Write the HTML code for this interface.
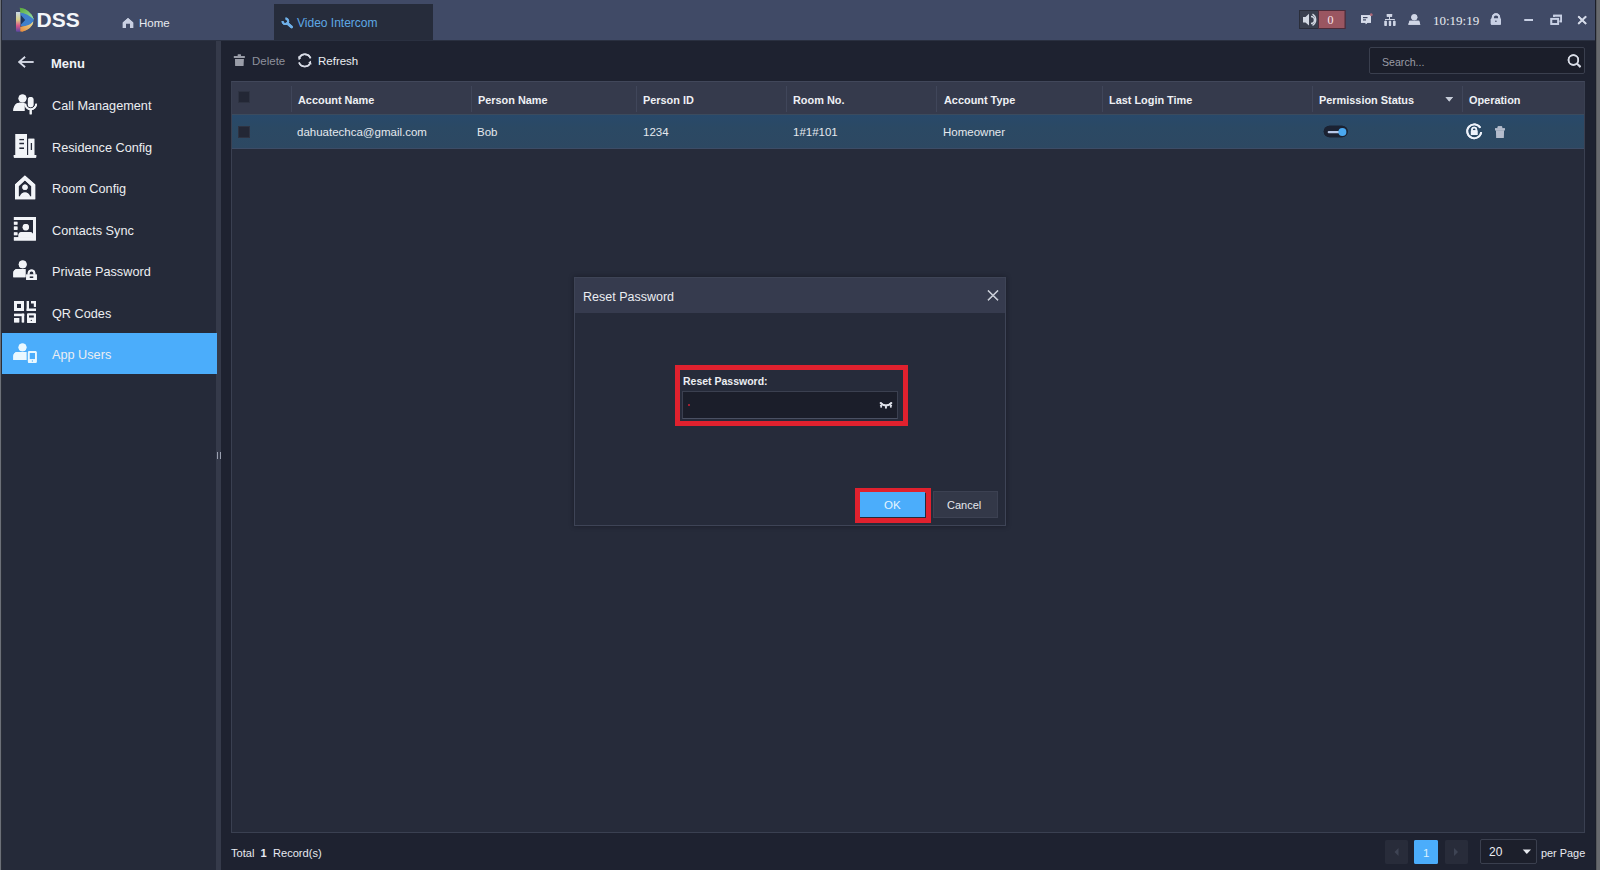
<!DOCTYPE html>
<html><head><meta charset="utf-8">
<style>
*{margin:0;padding:0;box-sizing:border-box}
html,body{width:1600px;height:870px;overflow:hidden;background:#1e2230;font-family:"Liberation Sans",sans-serif;color:#e6e8ee}
.a{position:absolute}
.t{position:absolute;white-space:nowrap;line-height:1}
#hdr{left:0;top:0;width:1600px;height:41px;background:#404a66;border-bottom:1px solid #2a3040}
#frameL{left:0;top:0;width:1px;height:870px;background:#6c7078}
#frameL2{left:1px;top:0;width:1px;height:870px;background:#2a2e38}
#frameR{left:1596px;top:0;width:4px;height:870px;background:#67696d;border-left:1px solid #56585c}
#frameR2{left:1595px;top:0;width:1px;height:870px;background:#1c1f2a}
#side{left:2px;top:41px;width:214px;height:829px;background:#252a39}
#split{left:216px;top:41px;width:5px;height:829px;background:#353a4a}
#main{left:221px;top:41px;width:1375px;height:829px;background:#1e2230}
#tbl{left:231px;top:81px;width:1354px;height:752px;background:#262b3a;border:1px solid #3a4051;border-top-color:#41475a}
#thead{left:232px;top:82px;width:1352px;height:32px;background:#353a4c}
#row{left:232px;top:114px;width:1352px;height:35px;background:linear-gradient(#28496a,#2b4964 40%,#2d4862);border-top:1px solid #3b4b5e;border-bottom:1px solid #3d4c66}
.sep{position:absolute;top:86px;width:1px;height:26px;background:#40465a}
.th{font-weight:bold;font-size:10.9px;color:#eef0f4;top:95px}
.td{font-size:11.5px;color:#e4e8ee;top:127px}
.cb{position:absolute;width:12px;height:12px;background:#232735;border:1px solid #2e3342}
.nav{font-size:12.7px;color:#eceef2;left:52px}
</style></head><body>
<div id="hdr" class="a"></div>
<div id="side" class="a"></div>
<div id="split" class="a"></div>
<div id="main" class="a"></div>
<div id="frameL" class="a"></div>
<div id="frameL2" class="a"></div>
<div id="frameR2" class="a"></div>
<div id="frameR" class="a"></div>

<!-- header -->
<div class="t" style="left:36.5px;top:8.5px;font-size:21px;font-weight:bold;color:#f4f6fa">DSS</div>
<div class="a" style="left:274px;top:4px;width:159px;height:36px;background:#262c3b"></div>
<div class="t" style="left:139px;top:18px;font-size:11.5px;color:#e8eaf0">Home</div>
<div class="t" style="left:297px;top:17px;font-size:12px;color:#5ea8e4">Video Intercom</div>
<div class="t" style="left:1433px;top:14px;font-size:13px;font-family:'Liberation Serif',serif;color:#e8eaf0">10:19:19</div>

<!-- sidebar -->
<div class="t" style="left:51px;top:57px;font-size:13px;font-weight:bold;color:#f0f2f6">Menu</div>
<div class="t nav" style="top:100px">Call Management</div>
<div class="t nav" style="top:142px">Residence Config</div>
<div class="t nav" style="top:183px">Room Config</div>
<div class="t nav" style="top:225px">Contacts Sync</div>
<div class="t nav" style="top:266px">Private Password</div>
<div class="t nav" style="top:308px">QR Codes</div>
<div class="a" style="left:2px;top:333px;width:215px;height:41px;background:#4badfb"></div>
<div class="t nav" style="top:349px">App Users</div>

<!-- toolbar -->
<div class="t" style="left:252px;top:56px;font-size:11.5px;color:#8e919c">Delete</div>
<div class="t" style="left:318px;top:56px;font-size:11.5px;color:#eceef2">Refresh</div>
<div class="a" style="left:1369px;top:47px;width:216px;height:27px;background:#1b1e2a;border:1px solid #3a3f4e;border-radius:2px"></div>
<div class="t" style="left:1382px;top:57px;font-size:10.6px;color:#9a9ca6">Search...</div>

<!-- table -->
<div id="tbl" class="a"></div>
<div id="thead" class="a"></div>
<div id="row" class="a"></div>
<div class="sep" style="left:291px"></div>
<div class="sep" style="left:471px"></div>
<div class="sep" style="left:636px"></div>
<div class="sep" style="left:786px"></div>
<div class="sep" style="left:936px"></div>
<div class="sep" style="left:1102px"></div>
<div class="sep" style="left:1312px"></div>
<div class="sep" style="left:1462px"></div>
<div class="cb" style="left:238px;top:91px"></div>
<div class="cb" style="left:238px;top:126px"></div>
<div class="t th" style="left:298px">Account Name</div>
<div class="t th" style="left:478px">Person Name</div>
<div class="t th" style="left:643px">Person ID</div>
<div class="t th" style="left:793px">Room No.</div>
<div class="t th" style="left:944px">Account Type</div>
<div class="t th" style="left:1109px">Last Login Time</div>
<div class="t th" style="left:1319px">Permission Status</div>
<div class="t th" style="left:1469px">Operation</div>
<div class="t td" style="left:297px">dahuatechca@gmail.com</div>
<div class="t td" style="left:477px">Bob</div>
<div class="t td" style="left:643px">1234</div>
<div class="t td" style="left:793px">1#1#101</div>
<div class="t td" style="left:943px">Homeowner</div>

<!-- footer -->
<div class="t" style="left:231px;top:848px;font-size:11.1px;color:#e8eaf0">Total&nbsp; <b>1</b>&nbsp; Record(s)</div>
<div class="t" style="left:1541px;top:848px;font-size:10.9px;color:#e8eaf0">per Page</div>




<!-- dialog -->
<div class="a" style="left:574px;top:277px;width:432px;height:249px;background:#262b3a;border:1px solid #3e4456;box-shadow:0 0 5px rgba(10,12,20,0.45)"></div>
<div class="a" style="left:575px;top:278px;width:430px;height:35px;background:#363b4e"></div>
<div class="t" style="left:583px;top:291px;font-size:12.5px;color:#eceef2">Reset Password</div>

<!-- dialog content -->
<div class="a" style="left:575px;top:313px;width:430px;height:212px;background:#262b3a"></div>
<div class="a" style="left:675px;top:365px;width:233px;height:61px;border:5px solid #e0212e"></div>
<div class="t" style="left:683px;top:376px;font-size:10.5px;font-weight:bold;color:#eceef2">Reset Password:</div>
<div class="a" style="left:682px;top:391px;width:216px;height:28px;background:#1b1e2a;border:1px solid #3b4050;border-bottom-color:#4a5062"></div>
<div class="a" style="left:688px;top:404px;width:2px;height:2px;background:#a02030"></div>
<div class="a" style="left:855px;top:488px;width:76px;height:35px;border:5px solid #e0212e"></div>
<div class="a" style="left:860px;top:492px;width:65px;height:25px;background:#4badfb"></div>
<div class="t" style="left:884px;top:500px;font-size:11.5px;color:#e6f4ff">OK</div>
<div class="a" style="left:933px;top:491px;width:65px;height:27px;background:#333848;border:1px solid #3c4152"></div>
<div class="t" style="left:947px;top:500px;font-size:11px;color:#e6e8ee">Cancel</div>

<!-- pagination -->
<div class="a" style="left:1385px;top:840px;width:23px;height:24px;background:#282c3a;border-radius:2px"></div>
<div class="a" style="left:1414px;top:840px;width:24px;height:24px;background:#4badfb;border-radius:2px"></div>
<div class="t" style="left:1423px;top:848px;font-size:11.5px;color:#d8f0ff">1</div>
<div class="a" style="left:1445px;top:840px;width:23px;height:24px;background:#282c3a;border-radius:2px"></div>
<div class="a" style="left:1480px;top:839px;width:57px;height:25px;background:#1c1f2b;border:1px solid #3a3f4e;border-radius:2px"></div>
<div class="t" style="left:1489px;top:846px;font-size:12px;color:#eceef2">20</div>
<!-- splitter handle -->
<div class="a" style="left:217px;top:452px;width:1px;height:7px;background:#9aa0b0"></div>
<div class="a" style="left:220px;top:452px;width:1px;height:7px;background:#9aa0b0"></div>
<svg class="a" style="left:0;top:0" width="1600" height="870" viewBox="0 0 1600 870">
<defs>
<linearGradient id="lgL" x1="0" y1="0" x2="0" y2="1"><stop offset="0" stop-color="#c8d8e8"/><stop offset="0.4" stop-color="#d8d088"/><stop offset="0.7" stop-color="#d85888"/><stop offset="1" stop-color="#6048a0"/></linearGradient>
<linearGradient id="lgG" x1="0" y1="0" x2="1" y2="1"><stop offset="0" stop-color="#58a838"/><stop offset="1" stop-color="#98e0a8"/></linearGradient>
<linearGradient id="lgO" x1="0" y1="1" x2="1" y2="0"><stop offset="0" stop-color="#e88838"/><stop offset="1" stop-color="#e0e0a0"/></linearGradient>
</defs>
<!-- DSS logo -->
<g>
<path d="M19.8 7.8 Q30.5 9.5 33.7 19.2 L30.2 18.6 Q27 13.6 20.6 12.8 Z" fill="url(#lgG)"/>
<path d="M20.6 12.8 Q27.5 13.8 33.7 19.2 Q33 23.6 29 25 Q25 26.2 21 25.8 Z" fill="#3f80cc"/>
<path d="M21 15.2 L25.2 20 L21 24.6 Z" fill="#20365e"/>
<path d="M20.4 27 Q29 26.4 33.4 21.6 Q32.2 28.6 22.6 31.6 L20.2 31.2 Z" fill="url(#lgO)"/>
<path d="M16 12 H20.2 V31.4 H17 Q16 31.4 16 30.4 Z" fill="url(#lgL)"/>
</g>
<!-- home -->
<path d="M122.8 22.5 L128 18 L133.2 22.5 V28 H130 V23.5 H126 V28 H122.8 Z" fill="#c9d0e2"/>
<!-- wrench -->
<path d="M285.5 18.55 A2.75 2.75 0 1 1 282.66 21.06" fill="none" stroke="#6fb0e8" stroke-width="2.1"/>
<path d="M287.6 23.5 L291.6 26.9" stroke="#6fb0e8" stroke-width="2.6" stroke-linecap="round"/>
<!-- speaker/alarm box -->
<rect x="1299.5" y="10.5" width="19" height="18" fill="#3a404f" stroke="#2a2e3b" stroke-width="1"/>
<rect x="1318.5" y="10.5" width="26.5" height="18" fill="#9a5661" stroke="#4c2c3a" stroke-width="1"/>
<path d="M1303 17 h2.5 l3.5 -3.2 v11.8 l-3.5 -3.2 h-2.5 z" fill="#d2d8e2"/>
<path d="M1311 16.5 a3.5 3.5 0 0 1 0 7" fill="none" stroke="#d2d8e2" stroke-width="1.6"/>
<path d="M1312.5 14.2 a6.5 6.5 0 0 1 0 11.2" fill="none" stroke="#d2d8e2" stroke-width="1.4"/>
<!-- message -->
<path d="M1361 15.2 h10 v7.5 h-3.5 l-1.8 1.6 v-1.6 h-4.7 z" fill="#d6dcea"/>
<rect x="1363" y="17" width="4.5" height="1.2" fill="#3e4762"/>
<rect x="1363" y="19.3" width="3" height="1.2" fill="#3e4762"/>
<circle cx="1371.2" cy="14.8" r="1.3" fill="#a86878"/>
<!-- network -->
<g fill="#d0d6e6">
<rect x="1386.8" y="13.9" width="5.3" height="2.8" rx="0.5"/>
<rect x="1389" y="16.5" width="1" height="3"/>
<rect x="1385" y="19" width="9.6" height="1"/>
<rect x="1384.5" y="20.7" width="2.2" height="5.3" rx="0.8"/>
<rect x="1388.9" y="20.7" width="2.2" height="5.3" rx="0.8"/>
<rect x="1393.2" y="20.7" width="2.2" height="5.3" rx="0.8"/>
</g>
<!-- person -->
<circle cx="1414.3" cy="17.2" r="3" fill="#d0d6e6"/>
<path d="M1409.5 20.8 h9.6 l1.2 4 h-12 z" fill="#d0d6e6"/>
<!-- lock -->
<path d="M1492.8 19 v-1.6 a3.2 3.2 0 0 1 6.4 0 v1.6" fill="none" stroke="#c8d0e4" stroke-width="2"/>
<rect x="1490.8" y="18.4" width="10.2" height="6.4" rx="1" fill="#c8d0e4"/>
<circle cx="1495.9" cy="21.3" r="0.8" fill="#3e4762"/>
<!-- minimize restore close -->
<rect x="1524.5" y="19" width="8.5" height="2" fill="#c8d0e4"/>
<path d="M1554 17 v-1.4 h7.2 v5.8 h-1.6" fill="none" stroke="#c8d0e4" stroke-width="1.6"/>
<rect x="1551.3" y="18.8" width="6.9" height="5.2" fill="none" stroke="#c8d0e4" stroke-width="1.7"/>
<path d="M1578.3 16.3 l7.8 7.6 M1586.1 16.3 l-7.8 7.6" stroke="#d4dae8" stroke-width="1.7"/>

<!-- sidebar -->
<path d="M33.5 62 H19.5 M25 56.8 L19.2 62 L25 67.2" fill="none" stroke="#d6dae6" stroke-width="1.6"/>
<g fill="#f2f4f8">
<!-- call mgmt -->
<circle cx="22.5" cy="98.3" r="3.9"/>
<path d="M13.3 111 C13.3 106 16 102.7 19.5 102.7 H24.5 V111 Z"/>
<rect x="27.9" y="97" width="5.5" height="10.2" rx="2.75"/>
<path d="M25.2 103.8 a5.5 5.5 0 0 0 11 0" fill="none" stroke="#f2f4f8" stroke-width="1.8"/>
<rect x="29.7" y="109" width="2" height="5.3"/>
<!-- building -->
<path fill-rule="evenodd" d="M15.5 134 H27 V155 H15.5 Z M19.2 138.8 V140.6 H24 V138.8 Z M19.2 142.6 V144.4 H24 V142.6 Z M19.2 147.2 V149 H24 V147.2 Z"/>
<path fill-rule="evenodd" d="M28.4 138.7 H34.3 V155 H28.4 Z M30.5 143 V150 H32.2 V143 Z"/>
<rect x="13.8" y="155" width="22.4" height="2.7" rx="0.6"/>
<!-- room config -->
<path fill-rule="evenodd" d="M24.9 175.5 L35.2 184.5 V199.2 H15 V184.5 Z M24.9 180.2 L18.6 186.2 V196.6 H31.4 V186.2 Z"/>
<circle cx="25" cy="187.2" r="2.6"/>
<path d="M20 196.8 C20.4 194 22.2 192.4 25 192.4 C27.8 192.4 29.6 194 30 196.8 Z"/>
<!-- contacts -->
<path fill-rule="evenodd" d="M13.9 216.9 H35.9 V240.5 H13.9 V237.3 H17.4 V220.1 H13.9 Z M17.4 220.1 V237.3 H33 V220.1 Z"/>
<rect x="13.9" y="221.8" width="3.5" height="2.8"/>
<rect x="13.9" y="226.6" width="3.5" height="3.2"/>
<rect x="13.9" y="232.4" width="3.5" height="2.8"/>
<circle cx="25.8" cy="227.2" r="3.1"/>
<path d="M18.5 237.4 V235 C18.5 233 20 231.9 22 231.9 H29.5 C31.5 231.9 33 233 33 235 V237.4 Z"/>
<!-- private password -->
<circle cx="22.7" cy="264.3" r="3.9"/>
<path d="M13.3 277.2 V273 C13.3 270.8 15 269.1 17.3 269.1 H25.5 V277.2 Z"/>
<path fill-rule="evenodd" d="M26.2 274.4 H36.8 V280.1 H26.2 Z M29.5 276.3 V277.9 H33.5 V276.3 Z"/>
<path d="M28.6 274.6 V273.2 a2.9 2.9 0 0 1 5.8 0 V274.6" fill="none" stroke="#f2f4f8" stroke-width="1.8"/>
<!-- QR -->
<path fill-rule="evenodd" d="M14.1 301 H24 V311.1 H14.1 Z M17 303.7 V308.1 H21 V303.7 Z"/>
<rect x="26.8" y="301" width="2.2" height="9.9"/>
<rect x="26.8" y="308.7" width="9.2" height="2.2"/>
<rect x="31" y="301" width="5" height="2.3"/>
<rect x="33.9" y="301" width="2.1" height="5.8"/>
<rect x="14.1" y="313.8" width="10" height="2.3"/>
<rect x="21.8" y="313.8" width="2.3" height="8.6"/>
<rect x="14.1" y="318" width="5.1" height="4.4"/>
<path fill-rule="evenodd" d="M28 313.6 H35 a1 1 0 0 1 1 1 V321.9 a1 1 0 0 1 -1 1 H28 a1 1 0 0 1 -1 -1 V314.6 a1 1 0 0 1 1 -1 Z M29 315.2 V317.7 H33.9 V315.2 Z M30.2 321 L31.25 319.2 L32.3 321 Z"/>
</g>
<!-- app users (on blue) -->
<g fill="#eaf8ff">
<circle cx="22.5" cy="347.3" r="3.9"/>
<path d="M13.3 360 V356 C13.3 353.8 15 352 17.3 352 H26.4 V360 Z"/>
<path fill-rule="evenodd" d="M29.4 351 H35.2 a1.5 1.5 0 0 1 1.5 1.5 V361.4 a1.5 1.5 0 0 1 -1.5 1.5 H29.4 a1.5 1.5 0 0 1 -1.5 -1.5 V352.5 a1.5 1.5 0 0 1 1.5 -1.5 Z M29.5 353 V359.2 H35.1 V353 Z M31.6 360.3 V361.8 H33 V360.3 Z"/>
</g>
<!-- toolbar trash -->
<g fill="#9a9da8">
<rect x="233.9" y="56" width="10.7" height="2"/>
<rect x="237.8" y="54.5" width="3" height="2"/>
<path d="M235 59 H243.7 L243.3 66 H235.4 Z"/>
</g>
<!-- refresh -->
<g fill="none" stroke="#d8dce6" stroke-width="1.6">
<path d="M299.63 57.17 A6.1 6.1 0 0 1 310.53 58.31"/>
<path d="M309.97 63.63 A6.1 6.1 0 0 1 299.07 62.49"/>
</g>
<path d="M298.27 56.32 L301.07 58.07 L298.81 59.98 Z" fill="#d8dce6"/>
<path d="M311.33 64.48 L308.53 62.73 L310.79 60.82 Z" fill="#d8dce6"/>
<!-- search -->
<circle cx="1573.4" cy="60" r="4.9" fill="none" stroke="#d8dce6" stroke-width="1.6"/>
<path d="M1577 63.6 L1580.5 67" stroke="#d8dce6" stroke-width="1.8"/>
<!-- sort -->
<path d="M1445.5 97 H1453 L1449.25 101.5 Z" fill="#c6ccd8"/>
<!-- toggle -->
<rect x="1323.7" y="125.8" width="24" height="11.4" rx="5.7" fill="#1b2232"/>
<rect x="1327.7" y="131" width="12" height="2.2" rx="1" fill="#b8c8e8"/>
<circle cx="1342.4" cy="132" r="4" fill="#4aa8f0"/>
<!-- reset op -->
<path d="M1480.3 127.8 A7 7 0 1 0 1481.2 132" fill="none" stroke="#eef2fa" stroke-width="1.8"/>
<path d="M1472 130.4 v-0.8 a2.2 2.2 0 0 1 4.4 0 v0.8" fill="none" stroke="#eef2fa" stroke-width="1.5"/>
<rect x="1470.9" y="130.3" width="6.6" height="4.8" rx="0.6" fill="#eef2fa"/>
<!-- op trash -->
<g fill="#b4bccc">
<rect x="1495" y="128.3" width="9.9" height="2"/>
<rect x="1497.6" y="126.3" width="4.6" height="2.2" rx="0.8"/>
<path d="M1496 130.6 H1504 L1503.6 138 H1496.4 Z"/>
</g>
<!-- dialog close -->
<path d="M988 290.5 L998 300.3 M998 290.5 L988 300.3" stroke="#c4c8d2" stroke-width="1.2"/>
<!-- eye closed -->
<path d="M880.4 402.6 Q886 408.6 891.6 402.6" fill="none" stroke="#d8dce6" stroke-width="1.8"/>
<path d="M881.6 404.6 L881 407.6 M885.9 406.2 V408.6 M890.4 404.6 L891 407.6" stroke="#d8dce6" stroke-width="1.7"/>
<!-- pagination -->
<div class="a" style="left:1385px;top:840px;width:23px;height:24px;background:#282c3a;border-radius:2px"></div>
<div class="a" style="left:1414px;top:840px;width:24px;height:24px;background:#4badfb;border-radius:2px"></div>
<div class="t" style="left:1423px;top:848px;font-size:11.5px;color:#d8f0ff">1</div>
<div class="a" style="left:1445px;top:840px;width:23px;height:24px;background:#282c3a;border-radius:2px"></div>
<div class="a" style="left:1480px;top:839px;width:57px;height:25px;background:#1c1f2b;border:1px solid #3a3f4e;border-radius:2px"></div>
<div class="t" style="left:1489px;top:846px;font-size:12px;color:#eceef2">20</div>
<!-- splitter handle -->
<div class="a" style="left:217px;top:452px;width:1px;height:7px;background:#9aa0b0"></div>
<div class="a" style="left:220px;top:452px;width:1px;height:7px;background:#9aa0b0"></div>
<svg class="a" style="left:0;top:0" width="1600" height="870" viewBox="0 0 1600 870">
<defs>
<linearGradient id="lgL" x1="0" y1="0" x2="0" y2="1"><stop offset="0" stop-color="#c8d8e8"/><stop offset="0.4" stop-color="#d8d088"/><stop offset="0.7" stop-color="#d85888"/><stop offset="1" stop-color="#6048a0"/></linearGradient>
<linearGradient id="lgG" x1="0" y1="0" x2="1" y2="1"><stop offset="0" stop-color="#58a838"/><stop offset="1" stop-color="#98e0a8"/></linearGradient>
<linearGradient id="lgO" x1="0" y1="1" x2="1" y2="0"><stop offset="0" stop-color="#e88838"/><stop offset="1" stop-color="#e0e0a0"/></linearGradient>
</defs>
<!-- DSS logo -->
<g>
<path d="M19.8 7.8 Q30.5 9.5 33.7 19.2 L30.2 18.6 Q27 13.6 20.6 12.8 Z" fill="url(#lgG)"/>
<path d="M20.6 12.8 Q27.5 13.8 33.7 19.2 Q33 23.6 29 25 Q25 26.2 21 25.8 Z" fill="#3f80cc"/>
<path d="M21 15.2 L25.2 20 L21 24.6 Z" fill="#20365e"/>
<path d="M20.4 27 Q29 26.4 33.4 21.6 Q32.2 28.6 22.6 31.6 L20.2 31.2 Z" fill="url(#lgO)"/>
<path d="M16 12 H20.2 V31.4 H17 Q16 31.4 16 30.4 Z" fill="url(#lgL)"/>
</g>
<!-- home -->
<path d="M122.8 22.5 L128 18 L133.2 22.5 V28 H130 V23.5 H126 V28 H122.8 Z" fill="#c9d0e2"/>
<!-- wrench -->
<path d="M285.5 18.55 A2.75 2.75 0 1 1 282.66 21.06" fill="none" stroke="#6fb0e8" stroke-width="2.1"/>
<path d="M287.6 23.5 L291.6 26.9" stroke="#6fb0e8" stroke-width="2.6" stroke-linecap="round"/>
<!-- speaker/alarm box -->
<rect x="1299.5" y="10.5" width="19" height="18" fill="#3a404f" stroke="#2a2e3b" stroke-width="1"/>
<rect x="1318.5" y="10.5" width="26.5" height="18" fill="#9a5661" stroke="#4c2c3a" stroke-width="1"/>
<path d="M1303 17 h2.5 l3.5 -3.2 v11.8 l-3.5 -3.2 h-2.5 z" fill="#d2d8e2"/>
<path d="M1311 16.5 a3.5 3.5 0 0 1 0 7" fill="none" stroke="#d2d8e2" stroke-width="1.6"/>
<path d="M1312.5 14.2 a6.5 6.5 0 0 1 0 11.2" fill="none" stroke="#d2d8e2" stroke-width="1.4"/>
<!-- message -->
<path d="M1361 15.2 h10 v7.5 h-3.5 l-1.8 1.6 v-1.6 h-4.7 z" fill="#d6dcea"/>
<rect x="1363" y="17" width="4.5" height="1.2" fill="#3e4762"/>
<rect x="1363" y="19.3" width="3" height="1.2" fill="#3e4762"/>
<circle cx="1371.2" cy="14.8" r="1.3" fill="#a86878"/>
<!-- network -->
<g fill="#d0d6e6">
<rect x="1386.8" y="13.9" width="5.3" height="2.8" rx="0.5"/>
<rect x="1389" y="16.5" width="1" height="3"/>
<rect x="1385" y="19" width="9.6" height="1"/>
<rect x="1384.5" y="20.7" width="2.2" height="5.3" rx="0.8"/>
<rect x="1388.9" y="20.7" width="2.2" height="5.3" rx="0.8"/>
<rect x="1393.2" y="20.7" width="2.2" height="5.3" rx="0.8"/>
</g>
<!-- person -->
<circle cx="1414.3" cy="17.2" r="3" fill="#d0d6e6"/>
<path d="M1409.5 20.8 h9.6 l1.2 4 h-12 z" fill="#d0d6e6"/>
<!-- lock -->
<path d="M1492.8 19 v-1.6 a3.2 3.2 0 0 1 6.4 0 v1.6" fill="none" stroke="#c8d0e4" stroke-width="2"/>
<rect x="1490.8" y="18.4" width="10.2" height="6.4" rx="1" fill="#c8d0e4"/>
<circle cx="1495.9" cy="21.3" r="0.8" fill="#3e4762"/>
<!-- minimize restore close -->
<rect x="1524.5" y="19" width="8.5" height="2" fill="#c8d0e4"/>
<path d="M1554 17 v-1.4 h7.2 v5.8 h-1.6" fill="none" stroke="#c8d0e4" stroke-width="1.6"/>
<rect x="1551.3" y="18.8" width="6.9" height="5.2" fill="none" stroke="#c8d0e4" stroke-width="1.7"/>
<path d="M1578.3 16.3 l7.8 7.6 M1586.1 16.3 l-7.8 7.6" stroke="#d4dae8" stroke-width="1.7"/>

<!-- sidebar -->
<path d="M33.5 62 H19.5 M25 56.8 L19.2 62 L25 67.2" fill="none" stroke="#d6dae6" stroke-width="1.6"/>
<g fill="#f2f4f8">
<!-- call mgmt -->
<circle cx="22.5" cy="98.3" r="3.9"/>
<path d="M13.3 111 C13.3 106 16 102.7 19.5 102.7 H24.5 V111 Z"/>
<rect x="27.9" y="97" width="5.5" height="10.2" rx="2.75"/>
<path d="M25.2 103.8 a5.5 5.5 0 0 0 11 0" fill="none" stroke="#f2f4f8" stroke-width="1.8"/>
<rect x="29.7" y="109" width="2" height="5.3"/>
<!-- building -->
<path fill-rule="evenodd" d="M15.5 134 H27 V155 H15.5 Z M19.2 138.8 V140.6 H24 V138.8 Z M19.2 142.6 V144.4 H24 V142.6 Z M19.2 147.2 V149 H24 V147.2 Z"/>
<path fill-rule="evenodd" d="M28.4 138.7 H34.3 V155 H28.4 Z M30.5 143 V150 H32.2 V143 Z"/>
<rect x="13.8" y="155" width="22.4" height="2.7" rx="0.6"/>
<!-- room config -->
<path fill-rule="evenodd" d="M24.9 175.5 L35.2 184.5 V199.2 H15 V184.5 Z M24.9 180.2 L18.6 186.2 V196.6 H31.4 V186.2 Z"/>
<circle cx="25" cy="187.2" r="2.6"/>
<path d="M20 196.8 C20.4 194 22.2 192.4 25 192.4 C27.8 192.4 29.6 194 30 196.8 Z"/>
<!-- contacts -->
<path fill-rule="evenodd" d="M13.9 216.9 H35.9 V240.5 H13.9 V237.3 H17.4 V220.1 H13.9 Z M17.4 220.1 V237.3 H33 V220.1 Z"/>
<rect x="13.9" y="221.8" width="3.5" height="2.8"/>
<rect x="13.9" y="226.6" width="3.5" height="3.2"/>
<rect x="13.9" y="232.4" width="3.5" height="2.8"/>
<circle cx="25.8" cy="227.2" r="3.1"/>
<path d="M18.5 237.4 V235 C18.5 233 20 231.9 22 231.9 H29.5 C31.5 231.9 33 233 33 235 V237.4 Z"/>
<!-- private password -->
<circle cx="22.7" cy="264.3" r="3.9"/>
<path d="M13.3 277.2 V273 C13.3 270.8 15 269.1 17.3 269.1 H25.5 V277.2 Z"/>
<path fill-rule="evenodd" d="M26.2 274.4 H36.8 V280.1 H26.2 Z M29.5 276.3 V277.9 H33.5 V276.3 Z"/>
<path d="M28.6 274.6 V273.2 a2.9 2.9 0 0 1 5.8 0 V274.6" fill="none" stroke="#f2f4f8" stroke-width="1.8"/>
<!-- QR -->
<path fill-rule="evenodd" d="M14.1 301 H24 V311.1 H14.1 Z M17 303.7 V308.1 H21 V303.7 Z"/>
<rect x="26.8" y="301" width="2.2" height="9.9"/>
<rect x="26.8" y="308.7" width="9.2" height="2.2"/>
<rect x="31" y="301" width="5" height="2.3"/>
<rect x="33.9" y="301" width="2.1" height="5.8"/>
<rect x="14.1" y="313.8" width="10" height="2.3"/>
<rect x="21.8" y="313.8" width="2.3" height="8.6"/>
<rect x="14.1" y="318" width="5.1" height="4.4"/>
<path fill-rule="evenodd" d="M28 313.6 H35 a1 1 0 0 1 1 1 V321.9 a1 1 0 0 1 -1 1 H28 a1 1 0 0 1 -1 -1 V314.6 a1 1 0 0 1 1 -1 Z M29 315.2 V317.7 H33.9 V315.2 Z M30.2 321 L31.25 319.2 L32.3 321 Z"/>
</g>
<!-- app users (on blue) -->
<g fill="#eaf8ff">
<circle cx="22.5" cy="347.3" r="3.9"/>
<path d="M13.3 360 V356 C13.3 353.8 15 352 17.3 352 H26.4 V360 Z"/>
<path fill-rule="evenodd" d="M29.4 351 H35.2 a1.5 1.5 0 0 1 1.5 1.5 V361.4 a1.5 1.5 0 0 1 -1.5 1.5 H29.4 a1.5 1.5 0 0 1 -1.5 -1.5 V352.5 a1.5 1.5 0 0 1 1.5 -1.5 Z M29.5 353 V359.2 H35.1 V353 Z M31.6 360.3 V361.8 H33 V360.3 Z"/>
</g>
<!-- toolbar trash -->
<g fill="#9a9da8">
<rect x="233.9" y="56" width="10.7" height="2"/>
<rect x="237.8" y="54.5" width="3" height="2"/>
<path d="M235 59 H243.7 L243.3 66 H235.4 Z"/>
</g>
<!-- refresh -->
<g fill="none" stroke="#d8dce6" stroke-width="1.6">
<path d="M299.63 57.17 A6.1 6.1 0 0 1 310.53 58.31"/>
<path d="M309.97 63.63 A6.1 6.1 0 0 1 299.07 62.49"/>
</g>
<path d="M298.27 56.32 L301.07 58.07 L298.81 59.98 Z" fill="#d8dce6"/>
<path d="M311.33 64.48 L308.53 62.73 L310.79 60.82 Z" fill="#d8dce6"/>
<!-- search -->
<circle cx="1573.4" cy="60" r="4.9" fill="none" stroke="#d8dce6" stroke-width="1.6"/>
<path d="M1577 63.6 L1580.5 67" stroke="#d8dce6" stroke-width="1.8"/>
<!-- sort -->
<path d="M1445.5 97 H1453 L1449.25 101.5 Z" fill="#c6ccd8"/>
<!-- toggle -->
<rect x="1323.7" y="125.8" width="24" height="11.4" rx="5.7" fill="#1b2232"/>
<rect x="1327.7" y="131" width="12" height="2.2" rx="1" fill="#b8c8e8"/>
<circle cx="1342.4" cy="132" r="4" fill="#4aa8f0"/>
<!-- reset op -->
<path d="M1480.3 127.8 A7 7 0 1 0 1481.2 132" fill="none" stroke="#eef2fa" stroke-width="1.8"/>
<path d="M1472 130.4 v-0.8 a2.2 2.2 0 0 1 4.4 0 v0.8" fill="none" stroke="#eef2fa" stroke-width="1.5"/>
<rect x="1470.9" y="130.3" width="6.6" height="4.8" rx="0.6" fill="#eef2fa"/>
<!-- op trash -->
<g fill="#b4bccc">
<rect x="1495" y="128.3" width="9.9" height="2"/>
<rect x="1497.6" y="126.3" width="4.6" height="2.2" rx="0.8"/>
<path d="M1496 130.6 H1504 L1503.6 138 H1496.4 Z"/>
</g>
<!-- dialog close -->
<path d="M988 290.5 L998 300.3 M998 290.5 L988 300.3" stroke="#c4c8d2" stroke-width="1.2"/>
<!-- eye closed -->
<path d="M880 402.5 Q886 408.5 892 402.5" fill="none" stroke="#e0e2ea" stroke-width="1.7"/>
<path d="M882 404.5 l-1.8 1.6 M886 406.2 v2 M890 404.5 l1.8 1.6" stroke="#e0e2ea" stroke-width="1.4"/>
<!-- pagination -->
<path d="M1398.5 848 L1394.5 852 L1398.5 856 Z" fill="#3e4454"/>
<path d="M1454 848 L1458 852 L1454 856 Z" fill="#3e4454"/>
<path d="M1522.7 849.5 H1531 L1526.85 854 Z" fill="#e6e8ee"/>
</svg>
<div class="t" style="left:1327.5px;top:14px;font-size:12px;font-family:'Liberation Serif',serif;color:#f8e4ec">0</div>
</body></html>
